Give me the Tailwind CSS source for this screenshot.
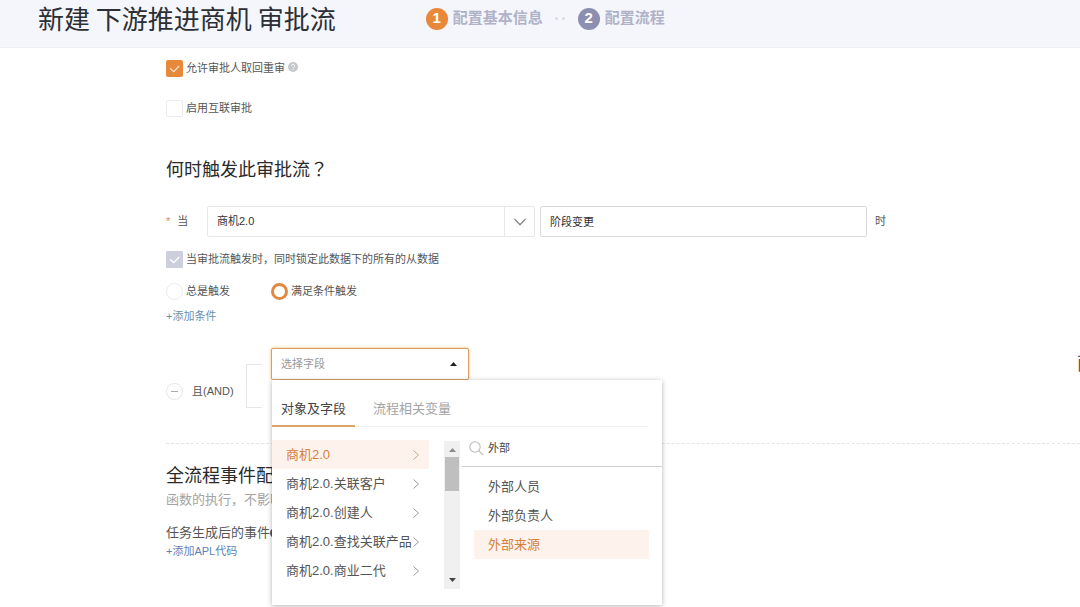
<!DOCTYPE html>
<html lang="zh-CN">
<head>
    <meta charset="UTF-8">
    <meta name="viewport" content="width=device-width, initial-scale=1.0">
    <title>新建 下游推进商机 审批流</title>
    <script src="https://cdn.jsdelivr.net/npm/@tailwindcss/browser@4"></script>
</head>
<body class="min-h-screen overflow-x-hidden bg-white font-['Liberation_Sans','Noto_Sans_CJK_SC',sans-serif] text-[11px] text-[#555]">
    <!-- 顶部步骤条 -->
    <header class="flex h-12 items-start border-b border-[#eceef4] bg-[#f4f6fb] pl-[38px]">
        <h1 class="font-['Noto_Sans_CJK_SC',sans-serif] text-[26px] leading-9 text-[#2c2f36]">新建 下游推进商机 审批流</h1>
        <ol class="ml-[90px] flex h-[37px] items-center text-[15px] font-bold text-[#b0b2c8]">
            <li class="flex items-center gap-[5px]">
                <span class="flex size-[22px] items-center justify-center rounded-full bg-[#e8883a] text-white">1</span>
                配置基本信息
            </li>
            <li class="flex w-[35px] justify-center gap-1" aria-hidden="true">
                <span class="size-[3px] rounded-full bg-[#d9dbe6]"></span>
                <span class="size-[3px] rounded-full bg-[#d9dbe6]"></span>
            </li>
            <li class="flex items-center gap-[5px]">
                <span class="flex size-[22px] items-center justify-center rounded-full bg-[#8d8fb0] text-white">2</span>
                配置流程
            </li>
        </ol>
    </header>

    <main class="pt-[10px]">
        <div class="pl-[166px]">
            <div class="flex h-5 items-center">
                <label class="flex items-center gap-[3px]">
                    <span class="grid size-[17px]">
                        <input type="checkbox" checked class="col-start-1 row-start-1 size-[17px] appearance-none rounded-[2px] bg-[#e8883a]">
                        <svg class="pointer-events-none col-start-1 row-start-1 size-[17px]" viewBox="0 0 17 17" fill="none" stroke="#fbe3cf" stroke-width="1.2"><path d="M4 8.2l3.7 3.4L13.2 6"/></svg>
                    </span>
                    允许审批人取回重审
                </label>
                <svg class="mb-[2px] ml-[3px] size-[10px]" viewBox="0 0 10 10"><circle cx="5" cy="5" r="5" fill="#c4c7cc"/><path d="M3.4 3.8a1.6 1.5 0 1 1 2.4 1.3c-.6.4-.8.6-.8 1.2M5 7.2v1" fill="none" stroke="#fff" stroke-width="1"/></svg>
            </div>
            <label class="mt-5 flex h-5 items-center gap-[3px]">
                <input type="checkbox" class="size-[17px] appearance-none rounded-[2px] border border-[#ececee] bg-white">
                启用互联审批
            </label>

            <!-- 触发条件 -->
            <h2 class="mt-[38px] text-[18px] leading-7 text-[#2a2a2a]">何时触发此审批流<span lang="zh-TW" class="font-['Noto_Sans_CJK_TC',sans-serif] leading-none">？</span></h2>
            <div class="mt-[22px] flex h-[31px] items-center">
                <label for="object" class="flex w-[41px] gap-[7px]"><span class="text-[#d98a5a]">*</span>当</label>
                <div class="grid w-[328px]">
                    <select id="object" class="col-start-1 row-start-1 h-[31px] appearance-none rounded-[2px] border border-[#e8e8ea] bg-white px-[9px] text-[#333]">
                        <option>商机2.0</option>
                    </select>
                    <span class="pointer-events-none col-start-1 row-start-1 flex h-[31px] w-[31px] items-center justify-center justify-self-end border-l border-[#e8e8ea]">
                        <svg class="size-[14px]" viewBox="0 0 14 14" fill="none" stroke="#888" stroke-width="1.3"><path d="M1.5 4L7 9.8 12.5 4"/></svg>
                    </span>
                </div>
                <input type="text" value="阶段变更" aria-label="触发动作" class="ml-[5px] h-[31px] w-[327px] rounded-[2px] border border-[#dadadc] px-[9px] pb-[2px] text-[#333]">
                <span class="ml-2">时</span>
            </div>
            <label class="mt-3 flex h-5 items-center gap-[3px]">
                <span class="grid size-[17px]">
                    <input type="checkbox" checked disabled class="col-start-1 row-start-1 size-[17px] appearance-none rounded-[1px] bg-[#cdcfdd]">
                    <svg class="pointer-events-none col-start-1 row-start-1 size-[17px]" viewBox="0 0 17 17" fill="none" stroke="#fff" stroke-width="1.3"><path d="M4 8.2l3.7 3.4L13.2 6"/></svg>
                </span>
                当审批流触发时，同时锁定此数据下的所有的从数据
            </label>
            <div class="mt-3 flex h-5 items-center">
                <label class="flex w-[105px] items-center gap-[3px]">
                    <input type="radio" name="trigger" class="size-[17px] appearance-none rounded-full border border-[#ececee] bg-white">
                    总是触发
                </label>
                <label class="flex items-center gap-[3px]">
                    <input type="radio" name="trigger" checked class="size-[17px] appearance-none rounded-full border-[3px] border-[#de8a42] bg-white">
                    满足条件触发
                </label>
            </div>
            <a href="#" class="mt-[5px] block w-fit leading-5 text-[#6a90aa]">+添加条件</a>

            <div class="mt-[22px] flex h-[95px] items-start">
                <div class="flex h-[86px] w-20 items-center gap-[9px]">
                    <button type="button" aria-label="删除条件" class="flex size-[17px] items-center justify-center rounded-full border border-[#e4e4e4]">
                        <span class="h-px w-[7px] bg-[#aaa]"></span>
                    </button>
                    且(AND)
                </div>
                <div class="mt-4 h-11 w-4 border-y border-l border-[#e6e6e6]"></div>

                <!-- 字段选择 -->
                <div class="relative z-10 ml-[9px] w-[198px]">
                    <button type="button" aria-expanded="true" class="flex h-8 w-full items-center justify-between rounded-[2px] border border-[#d9a066] bg-white px-[9px] text-[#999] shadow-[0_0_3px_#f0b060]">
                        选择字段
                        <svg class="mr-[2px] h-1 w-[7px]" viewBox="0 0 7 4" fill="#222"><path d="M0 4L3.5 0 7 4z"/></svg>
                    </button>
                    <div class="absolute top-full left-px h-[225px] w-[390px] bg-white text-[13px] shadow-[0_1px_5px_rgba(0,0,0,0.3)]">
                        <div role="tablist" class="mr-[14px] flex h-[47px] items-end gap-[9px] border-b border-[#efefef]">
                            <button type="button" role="tab" aria-selected="true" class="-mb-px h-[35px] border-b-2 border-[#dba469] px-[9px] text-[#444]">对象及字段</button>
                            <button type="button" role="tab" aria-selected="false" class="-mb-px h-[35px] border-b-2 border-transparent px-[9px] text-[#a3a3a3]">流程相关变量</button>
                        </div>
                        <div class="flex">
                            <ul class="mt-[13px] w-[157px] leading-[29px]">
                                <li class="flex items-center justify-between bg-[#fef3ec] pr-[9px] pl-[14px] whitespace-nowrap text-[#d5813c]">商机2.0
                                    <svg class="h-[10px] w-2 shrink-0" viewBox="0 0 8 10" fill="none" stroke="#c9a68c" stroke-width="1"><path d="M1.5 .5L6.5 5l-5 4.5"/></svg>
                                </li>
                                <li class="flex items-center justify-between pr-[9px] pl-[14px] whitespace-nowrap">商机2.0.关联客户
                                    <svg class="h-[10px] w-2 shrink-0" viewBox="0 0 8 10" fill="none" stroke="#999" stroke-width="1"><path d="M1.5 .5L6.5 5l-5 4.5"/></svg>
                                </li>
                                <li class="flex items-center justify-between pr-[9px] pl-[14px] whitespace-nowrap">商机2.0.创建人
                                    <svg class="h-[10px] w-2 shrink-0" viewBox="0 0 8 10" fill="none" stroke="#999" stroke-width="1"><path d="M1.5 .5L6.5 5l-5 4.5"/></svg>
                                </li>
                                <li class="flex items-center justify-between pr-[9px] pl-[14px] whitespace-nowrap">商机2.0.查找关联产品
                                    <svg class="h-[10px] w-2 shrink-0" viewBox="0 0 8 10" fill="none" stroke="#999" stroke-width="1"><path d="M1.5 .5L6.5 5l-5 4.5"/></svg>
                                </li>
                                <li class="flex items-center justify-between pr-[9px] pl-[14px] whitespace-nowrap">商机2.0.商业二代
                                    <svg class="h-[10px] w-2 shrink-0" viewBox="0 0 8 10" fill="none" stroke="#999" stroke-width="1"><path d="M1.5 .5L6.5 5l-5 4.5"/></svg>
                                </li>
                            </ul>
                            <!-- 滚动条 -->
                            <div class="mt-[14px] ml-[15px] flex h-[148px] w-4 flex-col items-center bg-[#f0f0f0]">
                                <svg class="mt-[7px] mb-[5px] h-1 w-[7px]" viewBox="0 0 7 4" fill="#8c8c8c"><path d="M0 4L3.5 0 7 4z"/></svg>
                                <div class="h-[34px] w-[14px] bg-[#bfbfbf]"></div>
                                <svg class="mt-auto mb-[7px] h-1 w-[7px]" viewBox="0 0 7 4" fill="#444"><path d="M0 0L3.5 4 7 0z"/></svg>
                            </div>
                            <div class="ml-[2px] flex-1">
                                <label class="flex h-10 items-center gap-1 border-b border-[#cfcfcf] pt-1 pl-[7px]">
                                    <svg class="size-[15px] shrink-0" viewBox="0 0 15 15" fill="none" stroke="#bbb" stroke-width="1.1"><circle cx="6" cy="6" r="5.2"/><path d="M9.8 9.8l4.4 4.2"/></svg>
                                    <input type="text" value="外部" aria-label="搜索字段" class="w-full text-[11px] text-[#444] outline-none">
                                </label>
                                <ul class="mt-[5px] mr-[13px] ml-3 leading-[29px]">
                                    <li class="pl-[14px]">外部人员</li>
                                    <li class="pl-[14px]">外部负责人</li>
                                    <li class="bg-[#fef3ec] pl-[14px] text-[#d5813c]">外部来源</li>
                                </ul>
                            </div>
                        </div>
                    </div>
                </div>

                <div class="mt-[3px] ml-auto w-[3px] overflow-hidden text-[18px] leading-[26px] whitespace-nowrap">面</div>
            </div>
        </div>

        <!-- 全流程事件 -->
        <section class="ml-[166px] border-t border-dashed border-[#e4e4e4] pt-[18px]">
            <h2 class="text-[18px] leading-7 text-[#2a2a2a]">全流程事件配</h2>
            <p class="text-[13px] leading-5 text-[#a3a3a3]">函数的执行，不影响</p>
            <h3 class="mt-[13px] flex items-center text-[13px] leading-5">任务生成后的事件
                <svg class="size-[10px]" viewBox="0 0 10 10"><circle cx="5" cy="5" r="5" fill="#555"/></svg>
            </h3>
            <a href="#" class="block w-fit leading-4 text-[#5f82b5]">+添加APL代码</a>
        </section>
    </main>
</body>
</html>
